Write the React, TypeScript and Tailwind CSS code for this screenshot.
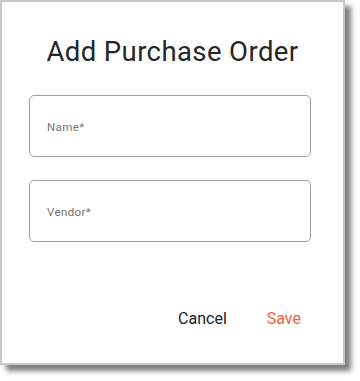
export default function App() {
  return (
    <div className="w-[360px] h-[381px] bg-white" style={{ fontFamily: 'Roboto, "Noto Sans", sans-serif' }}>
      <div className="w-[345px] h-[365px] border-2 border-[#c8c8c8] bg-white shadow-[6px_6px_5px_rgba(0,0,0,0.5)] flex flex-col">
        <h1 className="mt-[34px] text-center text-[27.5px] leading-[32px] text-[#262626] tracking-[0.4px]">
          Add Purchase Order
        </h1>
        <div className="mt-[27px] ml-[27px] w-[282px] flex flex-col gap-[23px]">
          <div className="h-[62px] rounded-[5px] border border-[#a0a0a0] flex items-center pl-[17px] pt-[4px]">
            <span className="text-[11.5px] text-[#757575] tracking-[0.4px]">Name*</span>
          </div>
          <div className="h-[62px] rounded-[5px] border border-[#a0a0a0] flex items-center pl-[17px] pt-[4px]">
            <span className="text-[11.5px] text-[#757575] tracking-[0.4px]">Vendor*</span>
          </div>
        </div>
        <div className="mt-[65px] flex justify-end items-center gap-[40px] pr-[42px]">
          <button className="text-[16px] text-[#212121]">Cancel</button>
          <button className="text-[16px] text-[#f4623a]">Save</button>
        </div>
      </div>
    </div>
  );
}
